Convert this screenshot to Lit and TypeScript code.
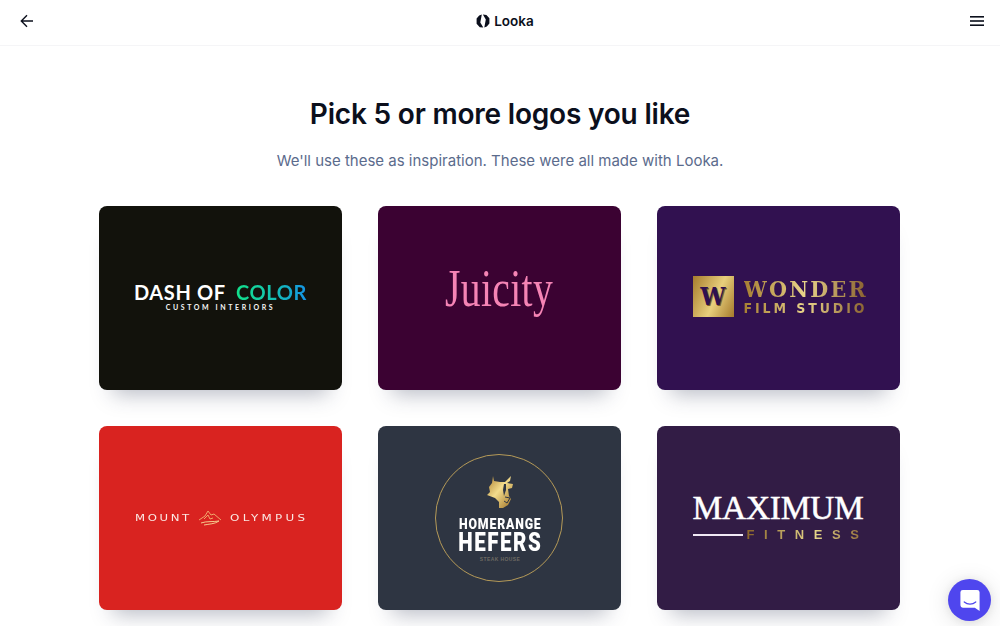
import { LitElement, html, css, svg } from "lit";
import { customElement } from "lit/decorators.js";

const goldStops = svg`<stop offset="0" stop-color="#a97c2e"/><stop offset=".45" stop-color="#f3dc8c"/><stop offset="1" stop-color="#9c6f25"/>`;

@customElement("app-root")
export class AppRoot extends LitElement {
  static styles = css`
    :host { display: block; height: 626px; overflow: hidden; background: #fff; position: relative; font-family: Inter, "Liberation Sans", sans-serif; color: #0b0f1c; }
    .top { height: 46px; box-sizing: border-box; border-bottom: 1px solid #f5f5f7; display: flex; align-items: center; justify-content: space-between; padding: 0 16px 3px 20px; }
    .top svg { display: block; }
    .brand { display: flex; align-items: center; gap: 4px; font-size: 13.5px; font-weight: 600; margin-left: 6px; }
    main { display: flex; flex-direction: column; align-items: center; }
    h1 { margin: 48px 0 0; font-size: 28px; line-height: 40px; font-weight: 600; letter-spacing: -0.2px; }
    .sub { margin: 15px 0 0; font-size: 15px; line-height: 24px; color: #5b6b8c; }
    .grid { margin: 33px 0 0 99px; align-self: flex-start; display: grid; grid-template-columns: repeat(3, 243px); gap: 36px; }
    .card { height: 184px; border-radius: 8px; display: flex; align-items: center; justify-content: center; box-shadow: 0 18px 20px -14px rgba(40, 50, 80, .34); overflow: hidden; }
    .dash { background: #12120c; }
    .juicy { background: #3b0232; }
    .wonder { background: #311150; }
    .red { background: #d92320; }
    .hef { background: #2e3542; }
    .max { background: #321c45; }

    .dash-in { display: flex; flex-direction: column; align-items: center; margin-top: -5px; }
    .dash-t { font-family: Lato, sans-serif; font-size: 20px; line-height: 22px; font-weight: 700; color: #fff; letter-spacing: .6px; white-space: pre; }
    .grad { background: linear-gradient(90deg, #12e08a, #14c4b0 50%, #1492e6); -webkit-background-clip: text; background-clip: text; color: transparent; }
    .dash-s { font-family: Lato, sans-serif; font-size: 7px; line-height: 8px; font-weight: 700; letter-spacing: 2.6px; color: #f4f4f4; }

    .juicy-t { font-family: "Liberation Serif", serif; font-size: 52px; line-height: 60px; color: #f584b5; transform: scaleX(.76); margin-top: -18px; letter-spacing: .5px; }

    .wonder-in { display: flex; align-items: center; gap: 10px; margin-top: -3px; margin-left: 1px; }
    .wbox { width: 41px; height: 41px; background: linear-gradient(115deg, #a67c2d, #e8cf7c 55%, #a57a2c); display: flex; align-items: center; justify-content: center; font-family: "DejaVu Serif", serif; font-stretch: condensed; font-weight: 700; font-size: 25px; color: #2e1150; text-shadow: 1px 1px 0 #7d5a2a; }
    .wtxt { display: flex; flex-direction: column; width: 122px; font-weight: 700; }
    .gold { background: linear-gradient(90deg, #a77f33, #e9d48a 50%, #8a6230); -webkit-background-clip: text; background-clip: text; color: transparent; }
    .w1 { font-family: "DejaVu Serif", serif; font-stretch: condensed; font-size: 23px; line-height: 24px; letter-spacing: 2.2px; white-space: nowrap; }
    .w2 { font-family: "DejaVu Sans", sans-serif; font-stretch: condensed; font-size: 14px; line-height: 15px; letter-spacing: 2.9px; white-space: nowrap; }

    .mo { display: flex; align-items: center; gap: 8px; color: #fbe9e4; font-family: "DejaVu Sans", sans-serif; font-size: 9px; }
    .mo span { display: block; white-space: nowrap; transform-origin: left center; }
    .mo .l { width: 55px; letter-spacing: 2px; transform: scaleX(1.3); }
    .mo .r { width: 77px; letter-spacing: 2.5px; transform: scaleX(1.32); }

    .ring { width: 128px; height: 128px; margin-right: 2px; box-sizing: border-box; border: 1px solid #b59a58; border-radius: 50%; display: flex; flex-direction: column; align-items: center; padding: 20px 0 0 3px; color: #fff; font-family: Roboto, sans-serif; font-weight: 900; }
    .cow { display: block; margin-bottom: 2px; }
    .h1 { font-size: 15px; line-height: 16px; margin-top: 4px; letter-spacing: 1px; transform: scaleX(.82); white-space: nowrap; }
    .h2 { font-size: 25px; line-height: 22px; letter-spacing: 1.9px; transform: scaleX(.82); }
    .h3 { font-family: "Liberation Sans", sans-serif; font-weight: 700; font-size: 5px; line-height: 8px; margin-top: 1px; color: #6d6a62; letter-spacing: .4px; }

    .max-in { display: flex; flex-direction: column; color: #fff; width: 172px; margin-top: -3px; }
    .m1 { font-family: "Liberation Serif", serif; font-size: 33.5px; line-height: 32px; white-space: nowrap; letter-spacing: -.3px; -webkit-text-stroke: .5px #fff; }
    .m2 { display: flex; align-items: center; gap: 4px; margin-top: 4px; }
    .m2 i { display: block; flex: none; width: 50px; height: 2px; background: #f0e8f4; }
    .m3 { font-family: "Liberation Sans", sans-serif; font-weight: 700; font-size: 13px; line-height: 14px; letter-spacing: 9.6px; white-space: nowrap; background: linear-gradient(90deg, #8a6428, #e8d98c 55%, #8a6230); -webkit-background-clip: text; background-clip: text; color: transparent; }

    .chat { position: absolute; right: 9px; bottom: 5px; width: 43px; height: 42px; border-radius: 50%; background: #4f46ee; display: flex; align-items: center; justify-content: center; box-shadow: 0 1px 8px rgba(0,0,0,.08), 0 3px 24px rgba(0,0,0,.12); }
  `;

  render() {
    return html`
      <header class="top">
        <svg width="14" height="14" viewBox="0 0 14 14" fill="none" stroke="#0b0f1c" stroke-width="1.4"><path d="M13 7H1.5M7 1.2 1.3 7 7 12.8"/></svg>
        <div class="brand">
          <svg width="14" height="14" viewBox="0 0 14 14" fill="#0b0f1c"><path d="M5.800.6 3.200 1.500.6 4.500V9.700L3.800 13.200 7.300 13.500 4.300 8.500Z"/><path d="M6.900.5 10.400.9 13.400 4.300V9.500L10.800 12.500 8.300 13.400 9.800 5.500Z"/></svg>
          Looka
        </div>
        <svg width="14" height="12" viewBox="0 0 14 12" fill="#0b0f1c"><rect y="1" width="14" height="1.6"/><rect y="5.2" width="14" height="1.6"/><rect y="9.4" width="14" height="1.6"/></svg>
      </header>
      <main>
        <h1>Pick 5 or more logos you like</h1>
        <p class="sub">We'll use these as inspiration. These were all made with Looka.</p>
        <section class="grid">
          <div class="card dash"><div class="dash-in">
            <div class="dash-t">DASH OF  <span class="grad">COLOR</span></div>
            <div class="dash-s">CUSTOM INTERIORS</div>
          </div></div>
          <div class="card juicy"><div class="juicy-t">Juicity</div></div>
          <div class="card wonder"><div class="wonder-in">
            <div class="wbox">W</div>
            <div class="wtxt"><div class="w1 gold">WONDER</div><div class="w2 gold">FILM STUDIO</div></div>
          </div></div>
          <div class="card red"><div class="mo">
            <span class="l">MOUNT</span>
            <svg width="24" height="18" viewBox="0 0 24 18" fill="none" stroke="#f0a66a" stroke-width="1"><path d="M1 11 7 7 10 2 13 6 16 5 23 11"/><path d="M6 10 10 6 12 10 15 9"/><path d="M3 14C8 12 16 13 21 12 17 15 11 15 6 16" stroke="#f5c98d"/></svg>
            <span class="r">OLYMPUS</span>
          </div></div>
          <div class="card hef"><div class="ring">
            <svg class="cow" width="28" height="35" viewBox="0 0 28 35">
              <defs><linearGradient id="cow" x1="0" y1="0" x2="1" y2="1">${goldStops}</linearGradient></defs>
              <path fill="url(#cow)" d="M7 1 8 6 14 7 19 7 23 3 25 1 24 6 21 8 27 9 26 13 22 14 23 21 25 24 22 30 17 33 13 33 13 27 9 23 1 20 4 17 3 12 6 8Z"/>
              <path fill="#2e3542" d="M18 9 20 9 20 15 18 21 17 15Z"/>
              <path fill="none" stroke="#2e3542" stroke-width="1" d="M19 22 24 23 21 28 18 26"/>
            </svg>
            <div class="h1">HOMERANGE</div>
            <div class="h2">HEFERS</div>
            <div class="h3">STEAK HOUSE</div>
          </div></div>
          <div class="card max"><div class="max-in">
            <div class="m1">MAXIMUM</div>
            <div class="m2"><i></i><div class="m3">FITNESS</div></div>
          </div></div>
        </section>
      </main>
      <div class="chat">
        <svg width="22" height="23" viewBox="0 0 22 24"><path fill="#fff" d="M3.500 1h15A2.500 2.500 0 0 1 21 3.500V23l-5-3.500H3.500A2.500 2.500 0 0 1 1 17V3.500A2.500 2.500 0 0 1 3.500 1Z"/><path fill="none" stroke="#4f46ee" stroke-width="1.300" stroke-linecap="round" d="M5 13.500c3.500 3 8.500 3 12 0"/></svg>
      </div>
    `;
  }
}
